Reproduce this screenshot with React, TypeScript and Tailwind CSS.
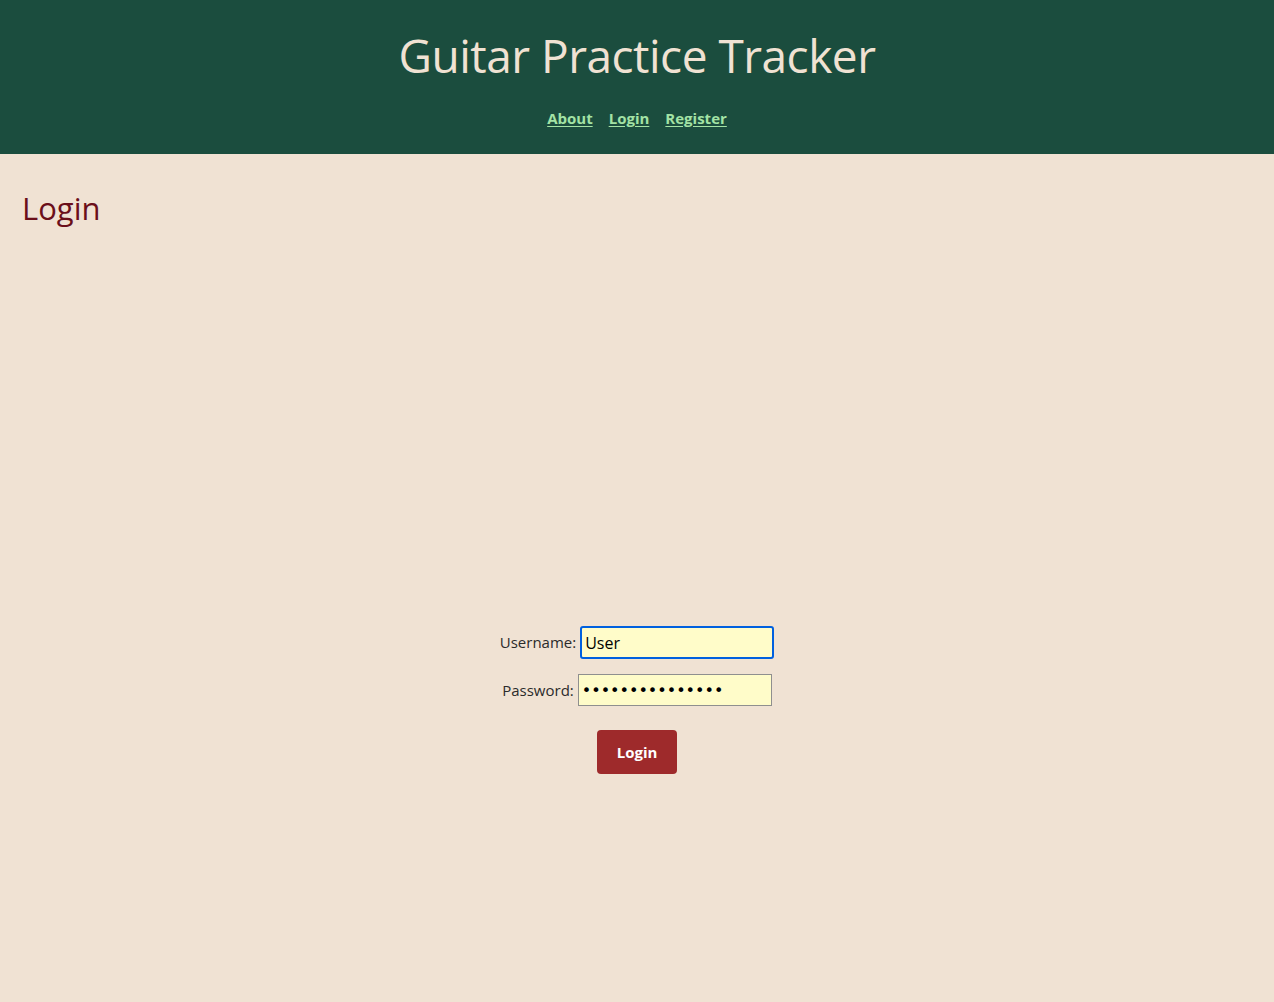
import { useState } from 'react';

export default function App() {
  const [username, setUsername] = useState('User');
  const [password, setPassword] = useState('passwordpasswor');

  return (
    <div className="min-h-[1002px] bg-[#f0e2d3] font-['Open_Sans','Noto_Sans',sans-serif]">
      {/* Header */}
      <header className="h-[154px] bg-[#1b4d3e] flex flex-col items-center pt-[22px]">
        <h1 className="text-[46px] leading-[66px] text-[#f0e2d3] tracking-[-0.5px]">Guitar Practice Tracker</h1>
        <nav className="mt-[19px] flex gap-4 text-[15px] font-bold text-[#a3e3a5]">
          <a href="#" className="underline underline-offset-2">About</a>
          <a href="#" className="underline underline-offset-2">Login</a>
          <a href="#" className="underline underline-offset-2">Register</a>
        </nav>
      </header>

      {/* Main */}
      <main className="px-[22px] pt-[34px]">
        <h2 className="text-[31px] leading-[40px] text-[#6b0f1a]">Login</h2>

        <form className="mt-[398px] flex flex-col items-center text-[15px] text-[#2b2b2b]" onSubmit={e => e.preventDefault()}>
          <div className="flex items-center gap-[4px]">
            <label htmlFor="username">Username:</label>
            <input
              id="username"
              value={username}
              onChange={e => setUsername(e.target.value)}
              className="w-[194px] h-[33px] px-[3px] bg-[#fffcc9] text-[16px] text-black border-2 border-[#0060df] rounded-[3px] outline-none"
            />
          </div>
          <div className="mt-[15px] flex items-center gap-[4px]">
            <label htmlFor="password">Password:</label>
            <input
              id="password"
              type="password"
              value={password}
              onChange={e => setPassword(e.target.value)}
              className="w-[194px] h-[32px] px-[3px] bg-[#fffcc9] text-[16px] text-black font-['DejaVu_Sans',sans-serif] border border-[#8f8f8f] outline-none"
            />
          </div>
          <button type="submit" className="mt-[24px] w-[80px] h-[44px] rounded-[4px] bg-[#9e2a2b] text-white font-bold text-[15px]">
            Login
          </button>
        </form>
      </main>
    </div>
  );
}
